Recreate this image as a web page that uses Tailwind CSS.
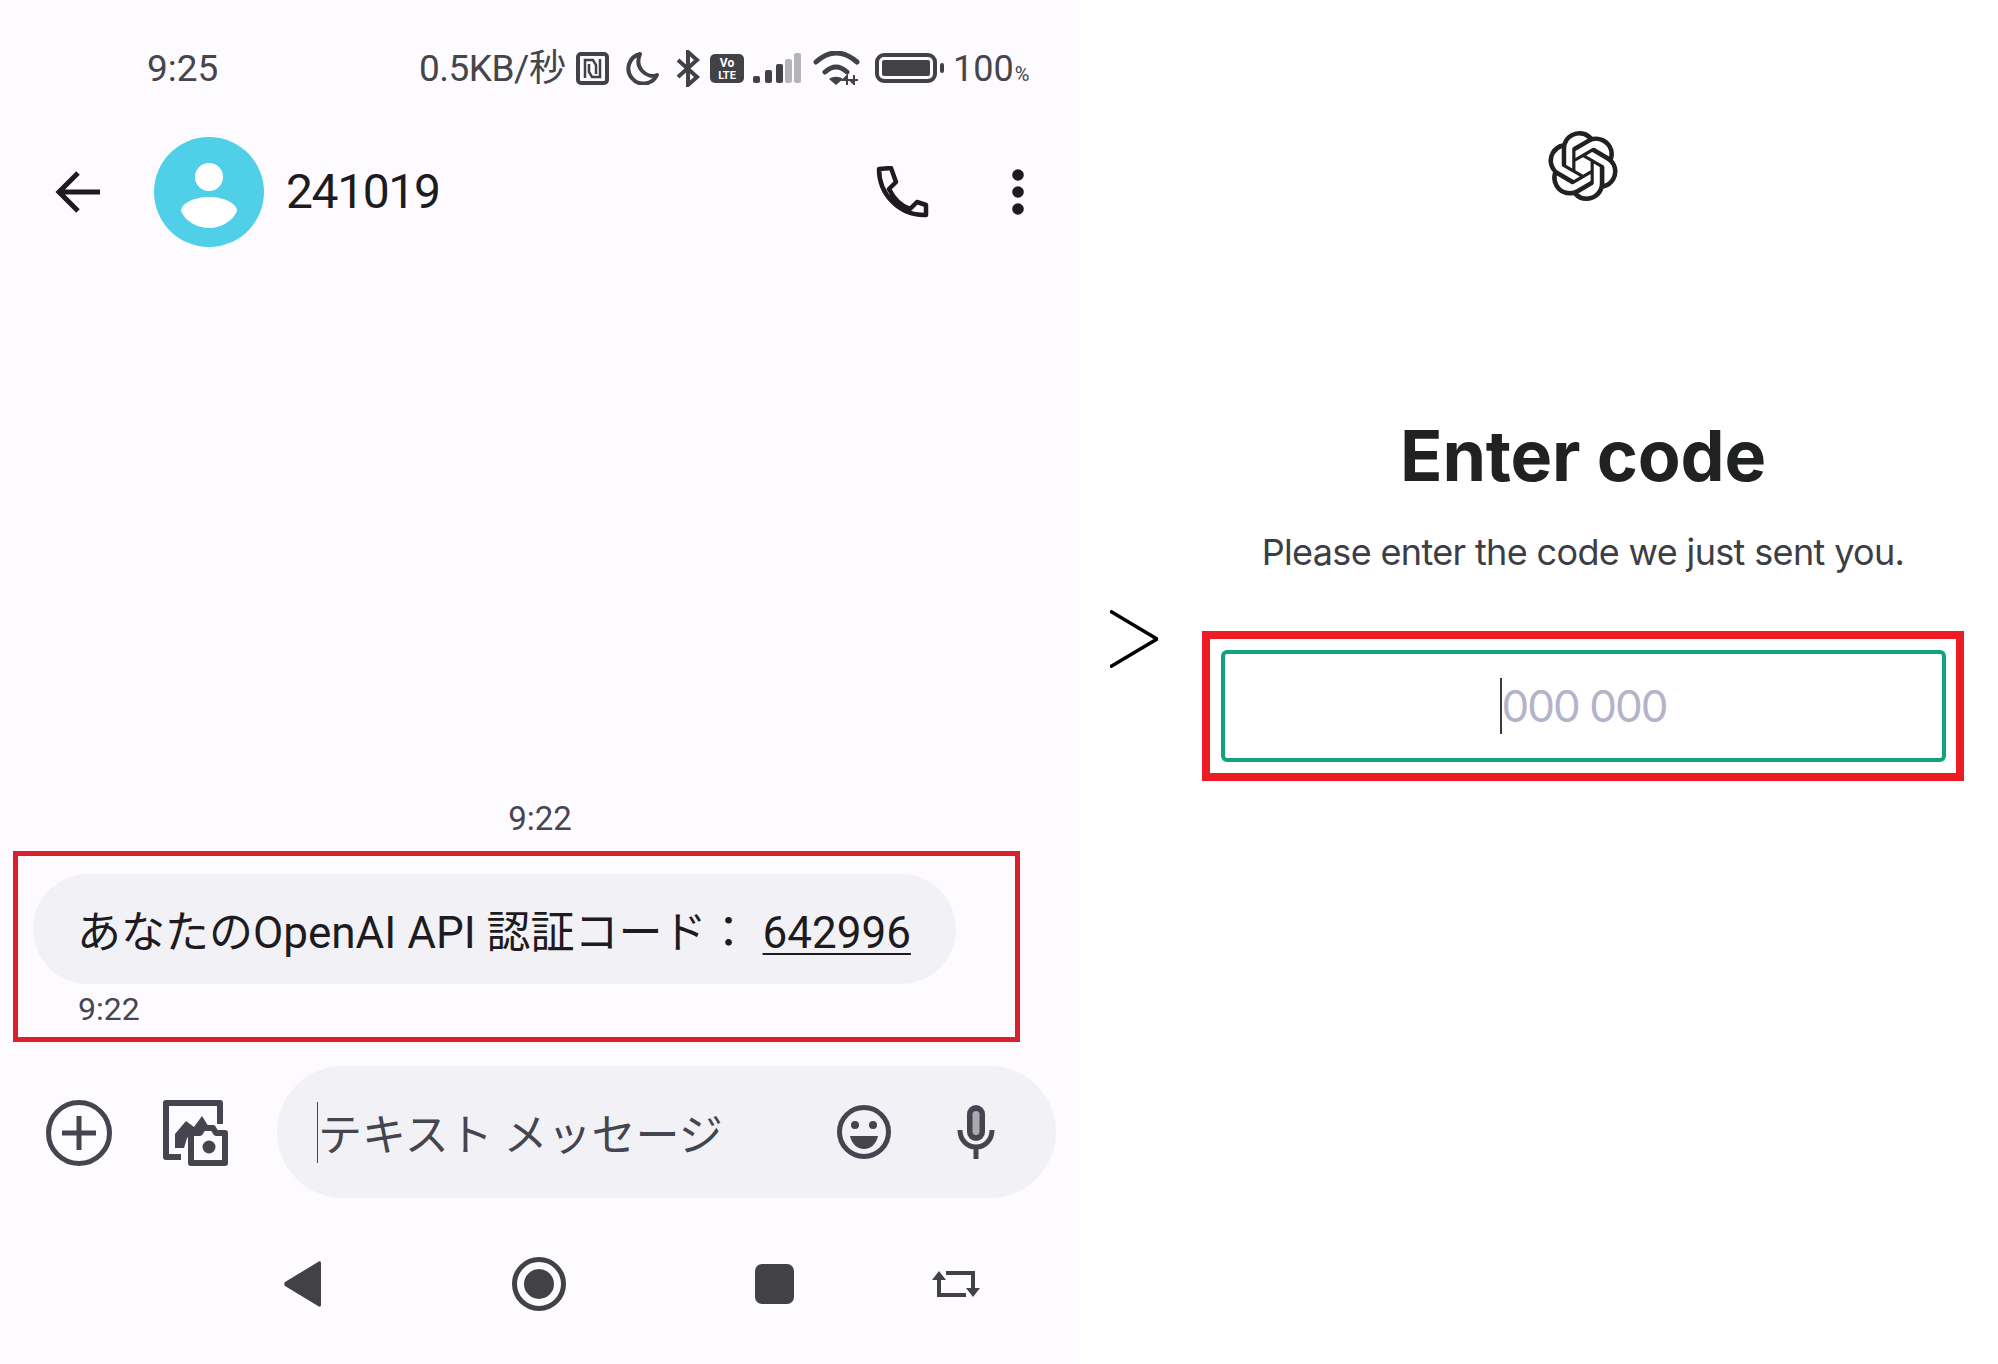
<!DOCTYPE html>
<html lang="ja">
<head>
  <meta charset="UTF-8" />
  <meta name="viewport" content="width=device-width, initial-scale=1.0" />
  <title>Enter code</title>
  <script src="https://cdn.jsdelivr.net/npm/@tailwindcss/browser@4"></script>
</head>
<body class="relative flex h-[1364px] w-[1998px] overflow-hidden bg-white font-['Roboto','Noto_Sans_CJK_JP',sans-serif]">

  <!-- Phone: messages -->
  <div class="flex h-full w-[1080px] flex-col bg-[#fdfbff]">
    <!-- Status bar -->
    <div class="flex h-[136px] items-center pl-[147px] text-[36px] text-[#45454a]">
      <span class="mt-[2px] w-[272px] text-[37px]">9:25</span>
      <span class="mt-[2px] w-[157px] whitespace-nowrap text-[37px] tracking-[-0.5px]">0.5KB/秒</span>
      <svg class="h-[33px] w-[33px]" viewBox="0 0 33 33" fill="none" stroke="#424246" stroke-width="4"><rect x="2" y="2" width="29" height="29" rx="3"/><path d="M9 26V8h8l3 5v9M24 7v18h-8l-3-5v-8" stroke-width="2.5"/></svg>
      <svg class="ml-[17px] h-[34px] w-[34px]" viewBox="0 0 34 34" fill="none" stroke="#424246" stroke-width="4"><path d="M14 3A15 15 0 1 0 31 24C21 28 8 17 14 3Z" stroke-linejoin="round"/></svg>
      <svg class="ml-[16px] h-[37px] w-[24px]" viewBox="0 0 24 37" fill="none" stroke="#424246" stroke-width="4"><path d="M2 10l19 17-9 8V2l9 8L2 27"/></svg>
      <svg class="ml-[10px] h-[29px] w-[34px]" viewBox="0 0 34 29"><rect width="34" height="29" rx="5" fill="#424246"/><text x="17" y="13" text-anchor="middle" font-size="12" font-weight="700" fill="#fff" font-family="Roboto">Vo</text><text x="17" y="25" text-anchor="middle" font-size="11" font-weight="700" fill="#fff" font-family="Roboto">LTE</text></svg>
      <svg class="ml-[9px] h-[30px] w-[48px]" viewBox="0 0 48 30"><g fill="#424246"><rect x="0" y="23" width="7" height="7" rx="2"/><rect x="12" y="17" width="7" height="13" rx="2"/><rect x="23" y="11" width="7" height="19" rx="2"/></g><g fill="#b5b5b8"><rect x="32" y="6" width="7" height="24" rx="2"/><rect x="41" y="0" width="7" height="30" rx="2"/></g></svg>
      <svg class="ml-[12px] h-[34px] w-[47px]" viewBox="0 0 47 34" fill="none" stroke="#424246" stroke-width="5" stroke-linecap="round"><path d="M3 11Q23 -7 44 11M12 21Q23 11 34 21"/><path d="M23 34l-7-6c4-3 10-3 14 0Z" fill="#424246" stroke="none"/><path d="M34 34v-9l-4 4h8M41 24v9l-4-4h8" stroke-width="2" stroke-linecap="butt"/></svg>
      <svg class="ml-[15px] h-[30px] w-[69px]" viewBox="0 0 69 30" fill="none"><rect x="2" y="2" width="58" height="26" rx="7" stroke="#424246" stroke-width="4"/><rect x="7" y="7" width="48" height="16" rx="2" fill="#424246"/><rect x="65" y="10" width="4" height="10" rx="2" fill="#424246"/></svg>
      <span class="ml-[9px] mt-[2px]">100</span><span class="ml-[1px] mt-[11px] text-[20px]">%</span>
    </div>

    <!-- Conversation header -->
    <div class="flex h-[112px] items-center pl-[55px]">
      <svg class="h-[44px] w-[45px]" viewBox="0 0 45 44" fill="none" stroke="#1d1b20" stroke-width="5"><path d="M45 22H4M23 3L4 22l19 19"/></svg>
      <div class="ml-[54px] flex h-[110px] w-[110px] items-center justify-center rounded-full bg-[#4fd0e8]">
        <svg class="h-[110px] w-[110px]" viewBox="0 0 110 110" fill="#fff"><circle cx="55" cy="40" r="14"/><path d="M55 60c14 0 28 6 28 14-4 10-16 17-28 17s-24-7-28-17c0-8 14-14 28-14Z"/></svg>
      </div>
      <span class="ml-[22px] text-[48px] tracking-[-1.4px] text-[#1d1b20]">241019</span>
      <svg class="ml-[437px] h-[52px] w-[53px]" viewBox="0 0 53 52" fill="none" stroke="#1d1b20" stroke-width="4.5" stroke-linejoin="round"><path d="M3 3l12-1 5 14-7 7c5 10 12 17 21 20l7-7 9 3 0 10C23 50 3 28 3 3Z"/></svg>
      <svg class="ml-[83px] h-[46px] w-[12px]" viewBox="0 0 12 46" fill="#1d1b20"><circle cx="6" cy="6" r="5.8"/><circle cx="6" cy="23" r="5.8"/><circle cx="6" cy="40" r="5.8"/></svg>
    </div>

    <!-- Message -->
    <div class="mt-[551px] h-[39px] text-center text-[33px] leading-[40px] text-[#45464f]">9:22</div>
    <div class="ml-[13px] mt-[13px] h-[191px] w-[1007px] border-[5px] border-[#d9202e] pl-[15px] pt-[18px]">
      <div class="flex h-[110px] w-[923px] items-center whitespace-nowrap rounded-full bg-[#f2f1f5] pl-[44px] pt-[8px] text-[44px] text-[#1d1b20]">
        <span>あなたのOpenAI API 認証コード：</span><span class="ml-[12px] underline decoration-[2px] underline-offset-[5px]">642996</span>
      </div>
      <div class="ml-[45px] mt-[7px] text-[32px] leading-[37px] text-[#45464f]">9:22</div>
    </div>

    <!-- Compose bar -->
    <div class="mt-[24px] flex h-[132px] items-center pl-[46px]">
      <svg class="mt-[2px] h-[66px] w-[66px]" viewBox="0 0 66 66" fill="none" stroke="#45454f" stroke-width="5"><circle cx="33" cy="33" r="30.5"/><path d="M33 16v34M16 33h34"/></svg>
      <svg class="ml-[50px] mt-[2px] h-[66px] w-[66px]" viewBox="0 0 66 66" fill="none"><path d="M19 57H4V3h54v21" stroke="#45454f" stroke-width="6" stroke-linejoin="round"/><path d="M13 48V34l11-13 8 6 8-11 10 16H32l-7 6-3 10Z" fill="#45454f"/><path d="M29 63V33h9l3-5h10l3 5h9v30Z" fill="#fdfbff" stroke="#45454f" stroke-width="6" stroke-linejoin="round"/><circle cx="47" cy="47" r="6.5" fill="#45454f"/></svg>
      <div class="ml-[49px] flex h-[132px] w-[779px] items-center rounded-full bg-[#f2f1f5] pl-[40px]">
        <div class="h-[61px] w-px bg-[#45454f]"></div>
        <span class="w-[519px] whitespace-nowrap pt-[8px] text-[44px] text-[#45454f]">テキスト メッセージ</span>
        <svg class="h-[54px] w-[54px]" viewBox="0 0 54 54"><circle cx="27" cy="27" r="24.5" fill="none" stroke="#45454f" stroke-width="5"/><circle cx="18" cy="20" r="4" fill="#45454f"/><circle cx="36" cy="20" r="4" fill="#45454f"/><path d="M13 31h28c-2 9-8 13-14 13s-12-4-14-13Z" fill="#45454f"/></svg>
        <svg class="ml-[66px] h-[54px] w-[38px]" viewBox="0 0 38 54" fill="none" stroke="#45454f" stroke-width="5"><rect x="10" y="0" width="18" height="36" rx="9" fill="#45454f" stroke="none"/><rect x="15.500" y="6" width="7" height="24" rx="3.500" fill="#a9a9b2" stroke="none"/><path d="M3 25c0 10 7 17 16 17s16-7 16-17M19 41v13"/></svg>
      </div>
    </div>

    <!-- Navigation bar -->
    <div class="flex h-[166px] items-center pl-[284px] pt-[6px]">
      <svg class="h-[46px] w-[37px]" viewBox="0 0 37 46"><path d="M37 2v42c0 2-2 2-3 1L1 25c-1-1-1-3 0-4L34 1c1-1 3-1 3 1Z" fill="#424244"/></svg>
      <svg class="ml-[191px] h-[54px] w-[54px]" viewBox="0 0 54 54"><circle cx="27" cy="27" r="24.5" fill="none" stroke="#424244" stroke-width="5"/><circle cx="27" cy="27" r="15" fill="#424244"/></svg>
      <div class="ml-[189px] h-[40px] w-[39px] rounded-[7px] bg-[#424244]"></div>
      <svg class="ml-[138px] h-[28px] w-[48px]" viewBox="0 0 48 28" fill="none" stroke="#424244" stroke-width="4"><path d="M7 8v17h27M41 20V3H14"/><path d="M0 10L7 1l7 9ZM34 18h14l-7 9Z" fill="#424244" stroke="none"/></svg>
    </div>
  </div>

  <!-- Arrow between panels -->
  <svg class="absolute left-[1110px] top-[610px] h-[58px] w-[48px]" viewBox="0 0 48 58" fill="none" stroke="#000" stroke-width="3.5"><path d="M0 1l47 28L0 57"/></svg>

  <!-- Code entry -->
  <div class="ml-[122px] flex h-full w-[762px] flex-col items-center">
    <svg class="mt-[131px] h-[70px] w-[70px]" viewBox="0 0 24 24" fill="#202123"><path d="M22.2819 9.8211a5.9847 5.9847 0 0 0-.5157-4.9108 6.0462 6.0462 0 0 0-6.5098-2.9A6.0651 6.0651 0 0 0 4.9807 4.1818a5.9847 5.9847 0 0 0-3.9977 2.9 6.0462 6.0462 0 0 0 .7427 7.0966 5.98 5.98 0 0 0 .511 4.9107 6.051 6.051 0 0 0 6.5146 2.9001A5.9847 5.9847 0 0 0 13.2599 24a6.0557 6.0557 0 0 0 5.7718-4.2058 5.9894 5.9894 0 0 0 3.9977-2.9001 6.0557 6.0557 0 0 0-.7475-7.0729zm-9.022 12.6081a4.4755 4.4755 0 0 1-2.8764-1.0408l.1419-.0804 4.7783-2.7582a.7948.7948 0 0 0 .3927-.6813v-6.7369l2.02 1.1686a.071.071 0 0 1 .038.052v5.5826a4.504 4.504 0 0 1-4.4945 4.4944zm-9.6607-4.1254a4.4708 4.4708 0 0 1-.5346-3.0137l.142.0852 4.783 2.7582a.7712.7712 0 0 0 .7806 0l5.8428-3.3685v2.3324a.0804.0804 0 0 1-.0332.0615L9.74 19.9502a4.4992 4.4992 0 0 1-6.1408-1.6464zM2.3408 7.8956a4.485 4.485 0 0 1 2.3655-1.9728V11.6a.7664.7664 0 0 0 .3879.6765l5.8144 3.3543-2.0201 1.1685a.0757.0757 0 0 1-.071 0l-4.8303-2.7865A4.504 4.504 0 0 1 2.3408 7.872zm16.5963 3.8558L13.1038 8.364 15.1192 7.2a.0757.0757 0 0 1 .071 0l4.8303 2.7913a4.4944 4.4944 0 0 1-.6765 8.1042v-5.6772a.79.79 0 0 0-.407-.667zm2.0107-3.0231l-.142-.0852-4.7735-2.7818a.7759.7759 0 0 0-.7854 0L9.409 9.2297V6.8974a.0662.0662 0 0 1 .0284-.0615l4.8303-2.7866a4.4992 4.4992 0 0 1 6.6802 4.66zM8.3065 12.863l-2.02-1.1638a.0804.0804 0 0 1-.038-.0567V6.0742a4.4992 4.4992 0 0 1 7.3757-3.4537l-.142.0805L8.704 5.459a.7948.7948 0 0 0-.3927.6813zm1.0976-2.3654l2.602-1.4998 2.6069 1.4998v2.9994l-2.5974 1.4997-2.6067-1.4997Z"/></svg>
    <h1 class="mt-[215px] h-[80px] text-[70px] font-bold leading-[80px] text-[#202123] font-[Inter,sans-serif] tracking-[-0.2px]">Enter code</h1>
    <p class="mt-[34px] h-[44px] whitespace-nowrap text-[36px] leading-[44px] text-[#3d3d45] font-[Inter,sans-serif] tracking-[-0.65px]">Please enter the code we just sent you.</p>
    <div class="mt-[57px] flex h-[150px] w-[762px] items-center justify-center border-[8px] border-[#ed1c24]">
      <div class="flex h-[112px] w-[725px] items-center justify-center rounded-[6px] border-[4px] border-[#10a37f]">
        <div class="h-[56px] w-[2px] bg-[#3a3a44]"></div>
        <span class="text-[44px] text-[#b5b3c9] font-[Inter,sans-serif] tracking-[-2px]">000 000</span>
      </div>
    </div>
  </div>

</body>
</html>
